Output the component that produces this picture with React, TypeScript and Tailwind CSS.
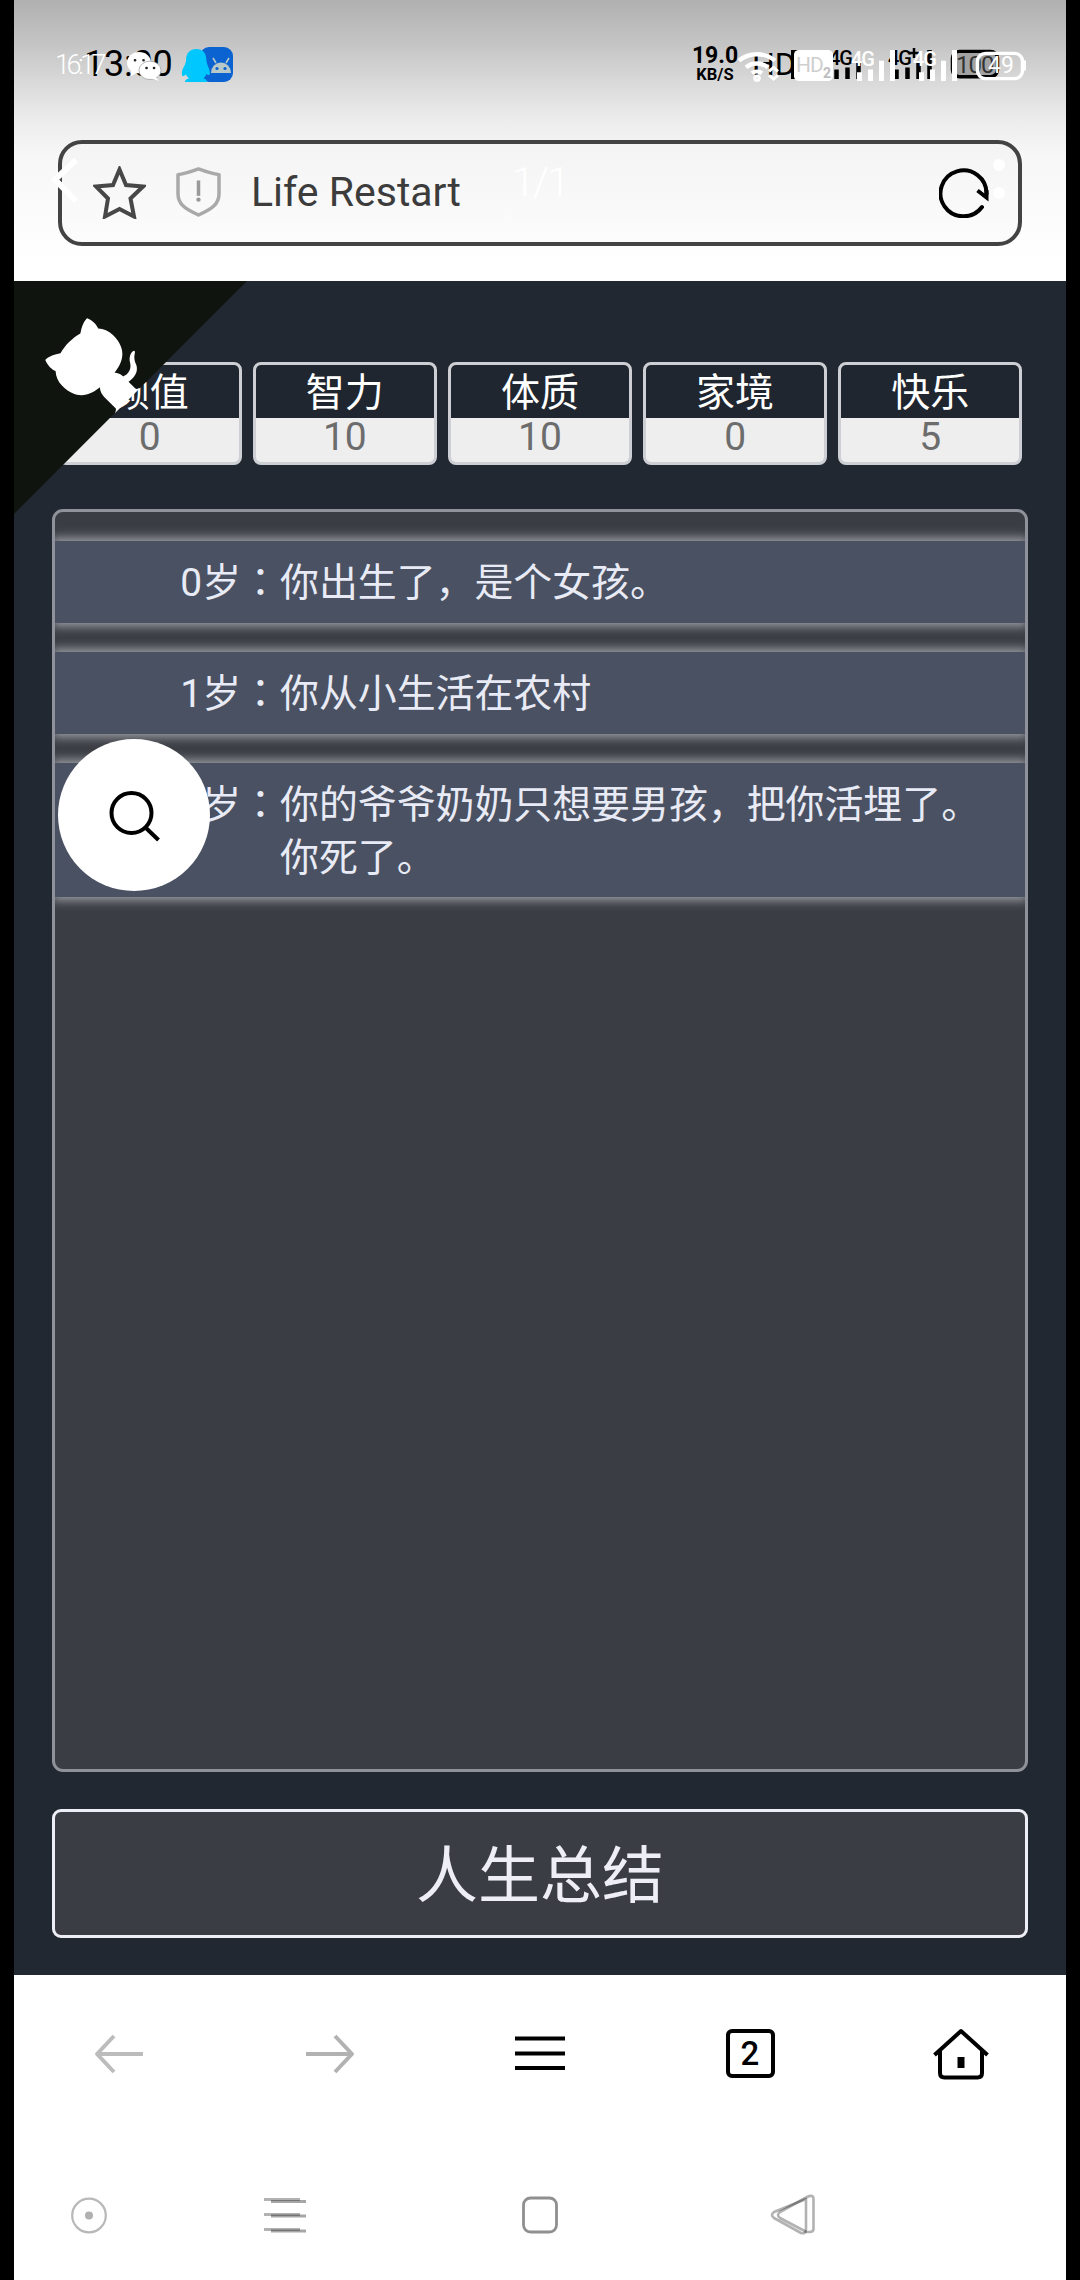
import { Fragment } from "react";

type Stat = { label: string; value: number };
type LifeEvent = { age: number; lines: string[] };

const stats: Stat[] = [
  { label: "颜值", value: 0 },
  { label: "智力", value: 10 },
  { label: "体质", value: 10 },
  { label: "家境", value: 0 },
  { label: "快乐", value: 5 },
];

const events: LifeEvent[] = [
  { age: 0, lines: ["你出生了，是个女孩。"] },
  { age: 1, lines: ["你从小生活在农村"] },
  { age: 2, lines: ["你的爷爷奶奶只想要男孩，把你活埋了。", "你死了。"] },
];

// Dark status icons that belong to the browser screen
function StatusBar() {
  return (
    <div className="absolute inset-x-0 top-[44px] h-10 text-black">
      <span className="absolute left-[70px] top-0 text-[36px] leading-10 tracking-[-0.200px]">
        13:00
      </span>
      <div className="absolute left-[186px] top-[3px] flex h-[35px] w-[33px] items-center justify-center rounded-[9px] bg-[#0a63d1]">
        <svg width="24" height="16" viewBox="0 0 24 16" className="ml-2">
          <path d="M2 16a10 10.500 0 0 1 20 0z" fill="#b9c9c9" />
          <path d="M7 6 4 1M17 6l3-5" stroke="#b9c9c9" strokeWidth="1.6" />
          <circle cx="8" cy="11.500" r="1.600" fill="#0a63d1" />
          <circle cx="16" cy="11.500" r="1.600" fill="#0a63d1" />
        </svg>
      </div>
      <div className="absolute left-[678px] top-[2px] flex w-[46px] flex-col items-center font-bold">
        <span className="text-[23px] leading-[20px]">19.0</span>
        <span className="text-[16.500px] leading-[18px]">KB/S</span>
      </div>
      <span className="absolute left-[738px] top-0 text-[32px] leading-10">
        HD
      </span>
      <svg
        className="absolute left-[776px] top-[4px]"
        width="214"
        height="35"
        viewBox="790 50 214 36"
        preserveAspectRatio="none"
      >
        <path d="M802 54h-9v26h9M793 67h9" fill="none" stroke="#000" strokeWidth="4" />
        <path
          d="M836.500 72v10M847.500 70v12M858.500 65v17M896.500 72v10M907.500 70v12M918.500 65v17M929.500 52v30"
          stroke="#000"
          strokeWidth="4.500"
        />
        <rect
          x="952.500"
          y="53.500"
          width="45"
          height="26"
          rx="7"
          fill="#a2a2a2"
          stroke="#000"
          strokeWidth="3.500"
        />
      </svg>
      <span className="absolute left-[815px] top-[4px] text-[20px] leading-5 font-medium tracking-[-1px]">
        4G
      </span>
      <span className="absolute left-[874px] top-[4px] text-[20px] leading-5 font-medium tracking-[-1px]">
        4G
      </span>
      <svg className="absolute left-[895px] top-[4px]" width="10" height="10" viewBox="0 0 10 10">
        <path d="M5 0v10M0 5h10" stroke="#000" strokeWidth="2.500" />
      </svg>
      <span className="absolute left-[942px] top-[9px] text-[24px] leading-6 tracking-[-1px] text-[#333]">
        100
      </span>
    </div>
  );
}

// White status icons floating above everything
function OverlayStatusBar() {
  return (
    <div className="absolute inset-x-0 top-[44px] h-10 text-white">
      <span className="absolute left-[41px] top-[1px] text-[27px] leading-10 font-light tracking-[-3.500px]">
        16:17
      </span>
      <svg
        className="absolute left-[112px] top-[7px]"
        width="36"
        height="31"
        viewBox="126 52 36 32"
        preserveAspectRatio="none"
      >
        <ellipse cx="139" cy="64" rx="12" ry="11" fill="#fff" />
        <path d="m131 71 0 7 7-4z" fill="#fff" />
        <ellipse cx="150" cy="72" rx="11" ry="9.500" fill="#fff" stroke="#999" strokeWidth="0.700" />
        <path d="m155 78 4 5-8-3z" fill="#fff" />
        <path
          d="M135 61.500h.1M143.500 61.500h.1M146.500 69.500h.1M154 69.500h.1"
          stroke="#222"
          strokeWidth="2.600"
          strokeLinecap="round"
        />
      </svg>
      <svg
        className="absolute left-[167px] top-[4px]"
        width="31"
        height="35"
        viewBox="0 0 31 36"
        preserveAspectRatio="none"
      >
        <path
          d="M15.500 1C9 1 5 5 5 13c0 3-3 7-4 11-.5 3 0 5 1 5s2-1 3-2c.5 2 1.500 3 3 4-3 1-4 2-4 4h22c0-2-1-3-3.500-4 1.500-1 2.500-3 3-4.500 1 1 1.500 1.500 2.500 1.500s1-3 .5-5c-.8-3-2.500-6-3-9C25.500 5 22 1 15.500 1z"
          fill="#00c8ff"
        />
      </svg>
      <svg
        className="absolute left-[722px] top-[4px]"
        width="295"
        height="35"
        viewBox="736 50 295 36"
        preserveAspectRatio="none"
      >
        <g fill="none" stroke="#fff" strokeWidth="4.500">
          <path d="M739 63a27 26 0 0 1 36 0M746 70a17 17 0 0 1 22 0M752 76a8 8 0 0 1 10 0" />
          <circle cx="757" cy="81" r="1.500" />
          <path d="m769 74 4.500-4 4.500 4M769 78l4.500 4 4.500-4" strokeWidth="3" />
          <rect x="977.500" y="55.500" width="45" height="26" rx="8" strokeWidth="3.500" />
          <path d="M1024.500 64v8" strokeWidth="3" strokeLinecap="round" />
        </g>
        <rect x="794" y="52" width="39" height="32" rx="5" fill="#fff" />
        <path
          d="M859.500 75v9M870.500 72v12M881.500 63v21M892.500 52v32M921.500 75v9M932.500 72v12M943.500 63v21M954.500 52v32"
          stroke="#fff"
          strokeWidth="5"
        />
      </svg>
      <span className="absolute left-[782px] top-[9px] text-[21px] leading-6 tracking-[-1px] text-[#cfcfcf]">
        HD
      </span>
      <span className="absolute left-[809px] top-[21px] text-[14px] leading-4 font-bold text-[#bdbdbd]">
        2
      </span>
      <span className="absolute left-[837px] top-[5px] text-[20px] leading-5 font-medium tracking-[-1px]">
        4G
      </span>
      <span className="absolute left-[899px] top-[5px] text-[20px] leading-5 font-medium tracking-[-1px]">
        4G
      </span>
      <span className="absolute left-[974px] top-[10px] text-[23px] leading-6">
        49
      </span>
    </div>
  );
}

function AddressBar() {
  return (
    <div className="mx-11 mt-[140px] flex h-[106px] items-center rounded-[24px] border-4 border-[#434343] bg-linear-to-b from-[#f4f4f4] to-[#fcfcfc] pb-[2px] pl-[31px] pr-[29px]">
      <svg width="53" height="53" viewBox="0 0 53 53">
        <path
          d="M26.500 3.500 33 19l17 1.500-12.500 12L41 50.500 26.500 43 12 50.500l3-18L3 20.500 20 19z"
          fill="none"
          stroke="#474747"
          strokeWidth="4"
        />
      </svg>
      <svg width="45" height="50" viewBox="0 0 45 52" preserveAspectRatio="none" className="ml-[30px]">
        <path
          d="M22.500 2C16 4.500 9 7 2 8v20c0 11 8 16 20.500 22C35 44 43 39 43 28V8C36 7 29 4.500 22.500 2z"
          fill="none"
          stroke="#a9a9a9"
          strokeWidth="3.500"
          strokeLinejoin="round"
        />
        <path d="M22.500 14v16" stroke="#999" strokeWidth="3.500" />
        <circle cx="22.500" cy="34" r="2.200" fill="#999" />
      </svg>
      <span className="ml-[30px] flex-1 text-[41px] leading-none text-[#3c3c3c]">
        Life Restart
      </span>
      <svg width="50" height="52" viewBox="0 0 50 52">
        <path
          d="M43 41A23 23 0 1 1 47.500 28"
          fill="none"
          stroke="#000"
          strokeWidth="4"
          strokeLinecap="round"
        />
        <path d="M38.500 24.500 47.500 31.500V24" fill="none" stroke="#000" strokeWidth="4" />
      </svg>
    </div>
  );
}

// Viewer controls that fade into the white header
function ViewerControls() {
  return (
    <>
      <svg className="absolute left-[36px] top-[157px]" width="30" height="48" viewBox="0 0 30 48">
        <path d="M26 3 5 22.500 26 44" fill="none" stroke="#fff" strokeWidth="6" />
      </svg>
      <span className="absolute left-0 top-[158px] w-full text-center text-[41px] leading-12 font-light tracking-[-2px] text-white">
        1/1
      </span>
      <div className="absolute left-[979px] top-[159px] flex flex-col gap-4">
        <i className="size-3 rounded-full bg-white" />
        <i className="size-3 rounded-full bg-white" />
      </div>
    </>
  );
}

function GithubCorner() {
  return (
    <svg
      className="absolute left-0 top-0 -scale-x-100"
      width="233"
      height="233"
      viewBox="0 0 250 250"
    >
      <path d="M0,0 L115,115 L130,115 L142,142 L250,250 L250,0 Z" fill="#10140f" />
      <path
        d="M128.300,109.000 C113.800,99.700 119.000,89.600 119.000,89.600 C122.000,82.700 120.500,78.600 120.500,78.600 C119.200,72.000 123.400,76.300 123.400,76.300 C127.300,80.900 125.500,87.300 125.500,87.300 C122.900,97.600 130.600,101.900 134.400,103.200"
        fill="#fff"
      />
      <path
        d="M115.000,115.000 C114.900,115.100 118.700,116.500 119.800,115.400 L133.700,101.600 C136.900,99.200 139.900,98.400 142.200,98.600 C133.800,88.000 127.500,74.400 143.800,58.000 C148.500,53.400 154.000,51.200 159.700,51.000 C160.300,49.400 163.200,43.600 171.400,40.100 C171.400,40.100 176.100,42.500 178.800,56.200 C183.100,58.600 187.200,61.800 190.900,65.400 C194.500,69.000 197.700,73.200 200.100,77.600 C213.800,80.200 216.300,84.900 216.300,84.900 C212.700,93.100 206.900,96.000 205.400,96.600 C205.100,102.400 203.000,107.800 198.300,112.500 C181.900,128.900 168.300,122.500 157.700,114.100 C157.900,116.900 156.700,120.900 152.700,124.900 L141.000,136.500 C139.800,137.700 141.600,141.900 141.800,141.800 Z"
        fill="#fff"
      />
    </svg>
  );
}

function Game() {
  return (
    <main className="relative flex h-[1694px] flex-col bg-[#222831] px-[38px] pt-[81px] font-['Roboto','Noto_Sans_CJK_SC',sans-serif]">
      <ul className="mx-[6px] grid grid-cols-5 gap-[11.600px]">
        {stats.map((stat) => (
          <li
            key={stat.label}
            className="flex h-[103px] flex-col overflow-hidden rounded-[8px] border-3 border-[#cdcfd5] bg-[#eeeeef] text-center text-[39px]"
          >
            <span className="h-[53px] bg-[#20262f] leading-[57px] text-white">
              {stat.label}
            </span>
            <span className="leading-[39px] text-[#6c6c6c]">{stat.value}</span>
          </li>
        ))}
      </ul>

      <ul className="mt-[44px] flex h-[1263px] flex-col gap-[29.500px] overflow-hidden rounded-[11px] border-3 border-[#8f929a] bg-[#3a3d43] pt-[29px]">
        {events.map((event) => (
          <li
            key={event.age}
            className="flex bg-[#4a5162] pt-[16px] pb-[13px] text-[38.900px] leading-[52.600px] text-[#e8ebf5] shadow-[0_0_10px_3px_#a2a4ab]"
          >
            <span className="w-[225px] shrink-0 text-right">
              {event.age}岁
              <span className="font-['Noto_Sans_CJK_TC',sans-serif] leading-none" lang="zh-TW">
                ：
              </span>
            </span>
            <span className="whitespace-nowrap">
              {event.lines.map((line) => (
                <Fragment key={line}>
                  {line}
                  <br />
                </Fragment>
              ))}
            </span>
          </li>
        ))}
      </ul>

      <button className="mt-[37px] h-[129px] shrink-0 rounded-[9px] border-3 border-[#eeeff6] bg-[#3a3d43] pt-[7px] text-[62px] leading-none text-[#eeeff6]">
        人生总结
      </button>

      <GithubCorner />

      {/* Floating search button */}
      <div className="absolute left-[44px] top-[457.500px] size-[152px] rounded-full bg-white">
        <svg width="152" height="152" viewBox="0 0 152 152">
          <circle cx="73.500" cy="74" r="20" fill="none" stroke="#000" strokeWidth="4" />
          <path d="m88 89 12.500 12" stroke="#000" strokeWidth="4" />
        </svg>
      </div>
    </main>
  );
}

function BrowserToolbar() {
  return (
    <nav className="grid h-[157px] grid-cols-5 items-center justify-items-center">
      <svg width="50" height="40" viewBox="0 0 50 40" fill="none" stroke="#bcbcbc" strokeWidth="4">
        <path d="M49 20H3M20 2 3 20l17 18" strokeLinejoin="round" />
      </svg>
      <svg width="50" height="40" viewBox="0 0 50 40" fill="none" stroke="#b2b2b2" strokeWidth="4">
        <path d="M1 20h46M30 2l17 18-17 18" strokeLinejoin="round" />
      </svg>
      <svg width="50" height="40" viewBox="0 0 50 40" stroke="#000" strokeWidth="4">
        <path d="M0 4.500h50M0 19.500h50M0 34h50" />
      </svg>
      <div className="flex h-[49px] w-[49px] items-center justify-center rounded-[6px] border-4 border-black pr-px text-[33px] leading-none font-medium">
        2
      </div>
      <svg width="58" height="52" viewBox="0 0 58 52" fill="none" stroke="#000" strokeWidth="4">
        <path d="M2.500 27 29 3l26.500 24" strokeLinejoin="round" />
        <path d="M8 22v23q0 4.500 4.500 4.500h33q4.500 0 4.500-4.500V22" />
        <path d="M25.500 29h7v11h-7z" fill="#000" stroke="none" />
      </svg>
    </nav>
  );
}

function SystemNav() {
  return (
    <nav className="flex h-[148px] items-start pl-[56px] pt-[61px]">
      <svg width="38" height="44" viewBox="0 0 38 44">
        <circle cx="19" cy="22.500" r="16.800" fill="none" stroke="#b8b8b8" strokeWidth="2.200" />
        <circle cx="19" cy="22.500" r="4" fill="#b0b0b0" />
      </svg>
      <svg className="ml-[156px]" width="42" height="44" viewBox="0 0 42 44" strokeWidth="2.800">
        <path d="M0 6.500h36M0 21.500h36M0 36.500h36" stroke="#000" strokeOpacity="0.300" />
        <path d="M7 8.500h35M7 23h35M7 38h35" stroke="#000" strokeOpacity="0.350" />
      </svg>
      <svg className="ml-[215px]" width="38" height="44" viewBox="0 0 38 44">
        <rect x="2.500" y="5" width="33" height="34" rx="7" fill="none" stroke="#909090" strokeWidth="2.800" />
      </svg>
      <svg
        className="ml-[211px]"
        width="46"
        height="44"
        viewBox="0 0 46 44"
        fill="none"
        stroke="#000"
        strokeOpacity="0.300"
        strokeWidth="2.600"
        strokeLinejoin="round"
      >
        <path d="M36 8v28q0 5.500-5 4L4 25q-4-3 0-6L36 6z" />
        <path d="M43.500 6v30q0 3-4 3h-3L10 25q-4-3 0-6L37 4q6.500-3 6.500 2z" />
      </svg>
    </nav>
  );
}

function App() {
  return (
    <div className="h-[2280px] w-[1080px] overflow-hidden bg-black px-[14px] font-['Roboto','Noto_Sans_CJK_SC',sans-serif]">
      <div className="flex h-full flex-col bg-white">
        <header className="relative flow-root h-[281px] bg-[linear-gradient(to_bottom,#b0b0b0_0px,#c5c5c5_45px,#d9d9d9_82px,#ececec_120px,#f7f7f7_155px,#ffffff_260px)]">
          <AddressBar />
          <StatusBar />
          <OverlayStatusBar />
          <ViewerControls />
        </header>
        <Game />
        <BrowserToolbar />
        <SystemNav />
      </div>
    </div>
  );
}

export default App;
